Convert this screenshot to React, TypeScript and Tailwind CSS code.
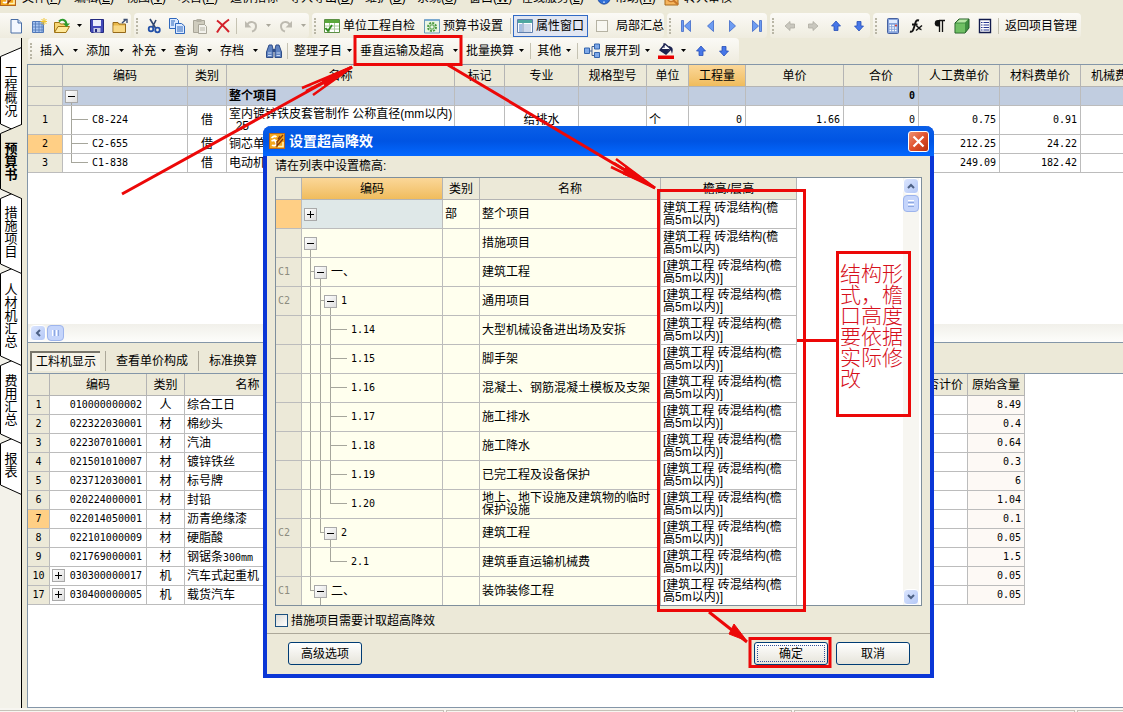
import type { ReactNode } from 'react';
import clsx from 'clsx';

type Guide = 'line' | 'tee' | 'end' | 'none';

interface TreeProps {
    guides?: Guide[];
    toggle?: 'plus' | 'minus';
    code?: string;
    cjk?: boolean;
}

const mono = "font-['DejaVu_Sans_Mono','Noto_Sans_CJK_SC',monospace] text-[10px]";

/* ---------- Icons ---------- */

const Svg = ({ children, size = 16 }: { children: ReactNode; size?: number }) => (
    <svg width={size} height={size} viewBox="0 0 16 16" fill="none" className="shrink-0" aria-hidden="true">
        {children}
    </svg>
);

const AppIcon = () => (
    <Svg>
        <rect x="0.5" y="0.5" width="15" height="15" fill="#f5a81c" stroke="#b5651d" />
        <path d="M2.500 5c2-2 4-2 5-1M2.500 8c2-1 4-1 5 0M3 12c1 1 4 1 4.500-1L5 6" stroke="#fff" strokeWidth="1.600" />
        <path d="M14 2L8 9v4l6-7M11 3L9 6" stroke="#8a3c0a" strokeWidth="1.300" />
        <path d="M9 13.500h5V9" stroke="#fff2b8" strokeWidth="1.500" />
    </Svg>
);

const NewIcon = () => (
    <Svg>
        <path d="M3 1.500h7l3.500 3.500v10H3z" fill="#f4f8ff" stroke="#4a6ea5" />
        <path d="M10 1.500V5h3.500" fill="#c9d9f2" stroke="#4a6ea5" />
    </Svg>
);

const SheetIcon = () => (
    <Svg>
        <path d="M1.500 3.500h11v11h-11z" fill="#a9c6f2" stroke="#5178b8" />
        <path d="M1 6h12M1 9h12M1 12h12M4.500 3v12M8 3v12M11 3v12" stroke="#5178b8" strokeWidth="0.8" />
        <path d="M13 0v7M9.500 3.500h7M10.500 1l5 5M15.500 1l-5 5" stroke="#f2c530" />
    </Svg>
);

const OpenIcon = () => (
    <Svg>
        <path d="M0.500 14V4.500h5l1 1.500h6v3" fill="#f7d774" stroke="#a07414" />
        <path d="M0.500 14.500L4 8.500h11.500l-3.500 6z" fill="#ffe99a" stroke="#a07414" />
        <path d="M5 3.500c3-3 7-2 7.500 3" stroke="#2d9b2d" strokeWidth="2" />
        <path d="M9 5.500h7L12.500 9z" fill="#2d9b2d" />
    </Svg>
);

const SaveIcon = () => (
    <Svg>
        <path d="M1.500 1.500h13v13h-12l-1-1z" fill="#4149b8" stroke="#23297f" />
        <path d="M4 2h8v6H4z" fill="#e9edfb" />
        <path d="M4.500 10h7v4.500h-7z" fill="#c8cde4" />
        <path d="M6 11h2v3H6z" fill="#23297f" />
    </Svg>
);

const FolderIcon = () => (
    <Svg>
        <path d="M1 4.500h5l1 1.500h6.500v8.500H1z" fill="#e9b84a" stroke="#95691a" />
        <path d="M1.500 7.500h11.500v6.500H1.500z" fill="#f8d884" />
        <path d="M10 5l4-3.500M11.500 1.500H15V5" stroke="#3d4f73" strokeWidth="1.4" />
    </Svg>
);

const CutIcon = () => (
    <Svg>
        <path d="M4 1l5.500 9M10 2L6.500 9" stroke="#30466f" strokeWidth="1.6" />
        <circle cx="5" cy="11" r="2.300" stroke="#2350a8" strokeWidth="1.800" />
        <circle cx="11.500" cy="12" r="2.300" stroke="#2350a8" strokeWidth="1.800" />
    </Svg>
);

const CopyIcon = () => (
    <Svg>
        <path d="M0.500 0.500h7l2 2v8h-9z" fill="#dbe9ff" stroke="#2f68bd" />
        <path d="M6.500 5.500h6l3 2.500v7.500h-9z" fill="#dbe9ff" stroke="#2f68bd" />
        <path d="M2 3h4M2 5h3M2 7h3M8 9h6M8 11h6M8 13h6" stroke="#2f68bd" />
    </Svg>
);

const PasteIcon = () => (
    <Svg>
        <path d="M1.500 2.500h11v12h-11z" fill="#cfccbe" stroke="#a9a699" />
        <path d="M4.500 1h5v3h-5z" fill="#b4b1a4" />
        <path d="M6.500 6.500h6l2 2v7h-8z" fill="#f3f2ec" stroke="#a9a699" />
        <path d="M8 10h5M8 12h5" stroke="#b8b5a8" />
    </Svg>
);

const DeleteIcon = () => (
    <Svg>
        <path d="M2 2.500c4 3 8 7 12 11.500M14 1.500C9 5 5 9 2 14.500" stroke="#d3202a" strokeWidth="2" />
    </Svg>
);

const UndoIcon = ({ flip }: { flip?: boolean }) => (
    <Svg>
        <g transform={flip ? 'translate(16 0) scale(-1 1)' : undefined}>
            <path d="M4 7c3-5 9-3 9 1 0 3-2 5-4 5.500" stroke="#bdbab0" strokeWidth="2" />
            <path d="M2 3v6.500h6.500z" fill="#bdbab0" />
        </g>
    </Svg>
);

const CheckSheetIcon = () => (
    <Svg>
        <path d="M0.500 1.500h15v13H0.500z" fill="#fff" stroke="#5b8f44" />
        <path d="M1 2h14v3H1z" fill="#5aa83c" />
        <path d="M1 8h14M1 11h14M5.500 5v9M10.500 5v9" stroke="#a9c99c" />
        <path d="M1.500 10l2.500 3 4-6" stroke="#2f8a1e" strokeWidth="1.8" />
    </Svg>
);

const GearSheetIcon = () => (
    <Svg>
        <path d="M0.500 1.500h15v13.500H0.500z" fill="#eaf6e4" stroke="#6b9ab8" />
        <path d="M1 1h14v2H1z" fill="#7ba9d0" />
        <circle cx="8" cy="9" r="4" stroke="#4a9a3e" strokeWidth="2" strokeDasharray="2 1.100" />
        <circle cx="8" cy="9" r="2.200" stroke="#4a9a3e" />
    </Svg>
);

const WindowIcon = () => (
    <Svg>
        <path d="M0.500 1.500h15v13H0.500z" fill="#fff" stroke="#5f7fae" />
        <path d="M1 2h14v3H1z" fill="#4fa7a0" />
        <path d="M2 7h3M2 9h3M2 11h3M2 13h3" stroke="#4f7fc4" />
        <path d="M7 7h7M7 9h7M7 11h7M7 13h7" stroke="#9fb4d8" />
        <path d="M6 5v9" stroke="#5f7fae" />
    </Svg>
);

const NavIcon = ({ bar, flip }: { bar?: boolean; flip?: boolean }) => (
    <Svg>
        <g transform={flip ? 'translate(16 0) scale(-1 1)' : undefined}>
            <path d="M11.500 2.500v11L5.500 8z" fill="#6d9cf2" stroke="#3f68c8" strokeWidth="0.8" />
            {bar && <path d="M2.500 2.500h2v11h-2z" fill="#6d9cf2" stroke="#3f68c8" strokeWidth="0.8" />}
        </g>
    </Svg>
);

const arrowRotation = { up: 0, right: 90, down: 180, left: 270 };

const ArrowIcon = ({ dir, muted }: { dir: 'up' | 'right' | 'down' | 'left'; muted?: boolean }) => (
    <Svg>
        <path
            transform={`rotate(${arrowRotation[dir]} 8 8)`}
            d="M8 3l4.500 5H10v4.500H6V8H3.500z"
            fill={muted ? '#c9c7be' : '#4777e8'}
            stroke={muted ? '#aeaca2' : '#274fb8'}
            strokeWidth="0.8"
        />
    </Svg>
);

const CalculatorIcon = () => (
    <Svg>
        <rect x="2.500" y="0.500" width="11" height="15" rx="1" fill="#87a4dc" stroke="#4661a0" />
        <path d="M4 2h8v3H4z" fill="#dfeaff" />
        <path d="M4.500 7.500h7M4.500 10h7M4.500 12.500h7" stroke="#fff" strokeWidth="1.500" strokeDasharray="1.700 1" />
        <path d="M10 7.500h2" stroke="#e2402c" strokeWidth="1.500" />
    </Svg>
);

const FunctionIcon = () => (
    <Svg>
        <path d="M11 2.500C7.500 1.500 7.500 5 6.500 8S5 14.500 2 13.500M4 6.500h5.500" stroke="#111" strokeWidth="1.900" />
        <path d="M8 8c2-1 2.500 4 5.500 3.500M14 7.500L8 12.500" stroke="#111" strokeWidth="1.500" />
    </Svg>
);

const PilcrowIcon = () => (
    <Svg>
        <path d="M8 2.500h6M8.500 2.500V14M11.500 2.500V14" stroke="#111" strokeWidth="1.300" />
        <path d="M8.500 2H7a3 3 0 000 6.500h1.500z" fill="#111" />
    </Svg>
);

const CubeIcon = () => (
    <Svg>
        <path d="M1 5l4-4h10v9l-4 5H1z" fill="#3f8f41" stroke="#245c27" />
        <path d="M1.500 5.500h9.500v9H1.500z" fill="#6fbf63" />
        <path d="M2 4.500l3.500-3h8.500l-3 3z" fill="#b7e5a6" />
    </Svg>
);

const ListIcon = () => (
    <Svg>
        <path d="M2.500 1.500h11v13h-11z" fill="#fff" stroke="#111a4d" strokeWidth="1.400" />
        <path d="M4 4.500h1.500M4 7h1.500M4 9.500h1.500M4 12h1.500M6.500 4.500H12M6.500 7H12M6.500 9.500H12M6.500 12H12" stroke="#27378f" />
    </Svg>
);

const BinocularsIcon = () => (
    <Svg>
        <path d="M3 2h3l1 4v8.500H0.500V9zM13 2h-3L9 6v8.500h6.500V9z" fill="#5f83c0" stroke="#2f4d88" />
        <path d="M6.500 6h3v3h-3z" fill="#2f4d88" />
        <path d="M2 10h3.500M10.500 10H14M2 12.500h3.500M10.500 12.500H14" stroke="#c7d8f5" />
    </Svg>
);

const ExpandIcon = () => (
    <Svg>
        <path d="M5 8h3M8 3.500v9M8 3.500h3M8 12.500h3" stroke="#44618f" />
        <path d="M0.500 5h5v5.500h-5zM10.500 1h5v5h-5zM10.500 9.500h5v5h-5z" fill="#7fa9e8" stroke="#3465ad" />
    </Svg>
);

const FillIcon = () => (
    <Svg>
        <path d="M7 1l6 5-5 5-6-4z" fill="#fff" stroke="#1c2350" strokeWidth="1.400" />
        <path d="M3 6l9 0-4 5-5-3zM11 3c4 1 4.500 3 3 8-1-3-1-5-3-6z" fill="#1c2350" />
        <path d="M6 0v5" stroke="#1c2350" />
        <path d="M0 12.500h16V16H0z" fill="#e80000" />
    </Svg>
);

const HelpIcon = () => (
    <Svg size={14}>
        <circle cx="8" cy="8" r="7" fill="#2f6fd8" stroke="#1b4596" />
        <path d="M6 5c1-2 5-1 4 1.500L8 9v1M8 12v1.500" stroke="#fff" strokeWidth="1.600" />
    </Svg>
);

const AuditIcon = () => (
    <Svg>
        <path d="M1 3h13v12H1z" fill="#f6b45c" stroke="#a86a1b" />
        <circle cx="7" cy="8" r="3.500" fill="#fdebc8" stroke="#c7772a" strokeWidth="1.500" />
        <path d="M9.500 10.500L14 14.500" stroke="#c7772a" strokeWidth="2" />
    </Svg>
);

const Caret = ({ muted }: { muted?: boolean }) => (
    <svg width="7" height="4" viewBox="0 0 7 4" className="shrink-0" aria-hidden="true">
        <path d="M1 0h5L3.500 3z" fill={muted ? '#aaa79b' : '#000'} />
    </svg>
);

/* ---------- Toolbar ---------- */

const ToolGroup = ({ children, label, className }: { children: ReactNode; label: string; className?: string }) => (
    <div
        role="toolbar"
        aria-label={label}
        className={clsx('flex h-[25px] shrink-0 items-center rounded-sm bg-gradient-to-b from-[#fbfaf6] to-[#efecdf]', className)}
    >
        <div className="ml-0.5 mr-1 h-4 w-0.5 shrink-0 border-l-2 border-dotted border-[#b9b6a6]" />
        {children}
    </div>
);

const ToolButton = ({ label, children }: { label: string; children: ReactNode }) => (
    <button type="button" aria-label={label} className="flex h-[22px] w-[23px] shrink-0 items-center justify-center">
        {children}
    </button>
);

const DropButton = ({ label, muted }: { label: string; muted?: boolean }) => (
    <button type="button" aria-label={label} className="flex h-[22px] w-3 shrink-0 items-center justify-center">
        <Caret muted={muted} />
    </button>
);

const Separator = () => <div className="mx-0.5 h-4 w-px shrink-0 bg-[#c5c2b2]" />;

const MenuButton = ({ children, wide }: { children: ReactNode; wide?: boolean }) => (
    <button type="button" className={clsx('flex h-[22px] shrink-0 items-center whitespace-nowrap pl-1 pr-[3px]', wide ? 'gap-2' : 'gap-1')}>
        {children}
        <Caret />
    </button>
);

const menus = ['文件(F)', '编辑(E)', '视图(V)', '项目(P)', '造价指标', '导入导出(D)', '维护(D)', '系统(S)', '窗口(W)', '在线服务(L)'];

const menuWidth = (name: string) => {
    if (name === '造价指标') return 'w-[59px]';
    return name.length > 5 ? 'w-[76px]' : 'w-[52px]';
};

const MenuLabel = ({ name }: { name: string }) => {
    const key = name.match(/^(.*\()(\w)\)$/);
    if (!key) return <>{name}</>;
    return (
        <>
            {key[1]}
            <u>{key[2]}</u>)
        </>
    );
};

const MenuBar = () => (
    <div className="flex h-[13px] items-end overflow-hidden whitespace-nowrap pb-[7px] leading-4">
        <div className="w-[22px] shrink-0">
            <AppIcon />
        </div>
        {menus.map((name) => (
            <button key={name} type="button" className={clsx('shrink-0 text-left', menuWidth(name))}>
                <MenuLabel name={name} />
            </button>
        ))}
        <button type="button" className="flex w-[67px] shrink-0 items-center gap-1">
            <HelpIcon />
            <span>
                <MenuLabel name="帮助(H)" />
            </span>
        </button>
        <button type="button" className="flex shrink-0 items-center gap-1">
            <AuditIcon />
            转入审核
        </button>
    </div>
);

const StandardToolbar = () => (
    <div className="flex gap-[3px]">
        <ToolGroup label="文件" className="-ml-1">
            <ToolButton label="新建"><NewIcon /></ToolButton>
            <ToolButton label="新建表"><SheetIcon /></ToolButton>
            <ToolButton label="打开"><OpenIcon /></ToolButton>
            <DropButton label="最近文件" />
            <ToolButton label="保存"><SaveIcon /></ToolButton>
            <ToolButton label="文件夹"><FolderIcon /></ToolButton>
        </ToolGroup>
        <ToolGroup label="编辑">
            <ToolButton label="剪切"><CutIcon /></ToolButton>
            <ToolButton label="复制"><CopyIcon /></ToolButton>
            <ToolButton label="粘贴"><PasteIcon /></ToolButton>
            <ToolButton label="删除"><DeleteIcon /></ToolButton>
            <Separator />
            <ToolButton label="撤销"><UndoIcon /></ToolButton>
            <DropButton label="撤销列表" muted />
            <ToolButton label="恢复"><UndoIcon flip /></ToolButton>
            <DropButton label="恢复列表" muted />
        </ToolGroup>
        <ToolGroup label="预算">
            <button type="button" className="flex shrink-0 items-center gap-[3px] px-1">
                <CheckSheetIcon />
                单位工程自检
            </button>
            <button type="button" className="flex shrink-0 items-center gap-[3px] px-[5px]">
                <GearSheetIcon />
                预算书设置
            </button>
            <Separator />
            <button type="button" className="flex h-[22px] shrink-0 items-center gap-[3px] border border-[#316ac5] bg-[#e1e6f2] px-[3px]">
                <WindowIcon />
                属性窗口
            </button>
            <label className="flex shrink-0 items-center gap-2 pl-2">
                <input type="checkbox" className="size-3 appearance-none border border-[#b5b2a3] bg-[#f8f7f1]" />
                局部汇总
            </label>
        </ToolGroup>
        <ToolGroup label="导航">
            <ToolButton label="首条"><NavIcon bar /></ToolButton>
            <ToolButton label="上一条"><NavIcon /></ToolButton>
            <ToolButton label="下一条"><NavIcon flip /></ToolButton>
            <ToolButton label="末条"><NavIcon bar flip /></ToolButton>
        </ToolGroup>
        <ToolGroup label="移动">
            <ToolButton label="升级"><ArrowIcon dir="left" muted /></ToolButton>
            <ToolButton label="降级"><ArrowIcon dir="right" muted /></ToolButton>
            <ToolButton label="上移"><ArrowIcon dir="up" /></ToolButton>
            <ToolButton label="下移"><ArrowIcon dir="down" /></ToolButton>
        </ToolGroup>
        <ToolGroup label="工具">
            <ToolButton label="计算器"><CalculatorIcon /></ToolButton>
            <ToolButton label="函数"><FunctionIcon /></ToolButton>
            <ToolButton label="段落"><PilcrowIcon /></ToolButton>
            <ToolButton label="图元"><CubeIcon /></ToolButton>
            <ToolButton label="清单"><ListIcon /></ToolButton>
            <Separator />
            <button type="button" className="shrink-0 px-1">返回项目管理</button>
        </ToolGroup>
    </div>
);

const BudgetToolbar = () => (
    <div className="flex pl-1.5">
        <ToolGroup label="预算书" className="pr-1">
            <MenuButton wide>插入</MenuButton>
            <MenuButton wide>添加</MenuButton>
            <MenuButton>补充</MenuButton>
            <MenuButton wide>查询</MenuButton>
            <MenuButton wide>存档</MenuButton>
            <ToolButton label="查找"><BinocularsIcon /></ToolButton>
            <Separator />
            <MenuButton>整理子目</MenuButton>
            <MenuButton wide>垂直运输及超高</MenuButton>
            <MenuButton>批量换算</MenuButton>
            <Separator />
            <MenuButton>其他</MenuButton>
            <Separator />
            <MenuButton>
                <ExpandIcon />
                展开到
            </MenuButton>
            <ToolButton label="填充颜色"><FillIcon /></ToolButton>
            <DropButton label="选择颜色" />
            <ToolButton label="上移"><ArrowIcon dir="up" /></ToolButton>
            <ToolButton label="下移"><ArrowIcon dir="down" /></ToolButton>
        </ToolGroup>
    </div>
);

/* ---------- Side tabs ---------- */

const sideTabs = [
    { name: '工程概况', height: 87, layer: 'z-[6]' },
    { name: '预算书', height: 75, layer: 'z-[7]', active: true },
    { name: '措施项目', height: 85, layer: 'z-[5]' },
    { name: '人材机汇总', height: 102, layer: 'z-[4]' },
    { name: '费用汇总', height: 88, layer: 'z-[3]' },
    { name: '报表', height: 61, layer: 'z-[2]' },
];

const SideTabs = () => (
    <nav className="flex w-[22px] shrink-0 flex-col border-r border-black bg-[#f3f2ea] pt-[19px]">
        {sideTabs.map(({ name, height, layer, active }) => (
            <button
                key={name}
                type="button"
                style={{ height }}
                className={clsx(
                    'relative -mt-[10px] flex w-[22px] shrink-0 items-center justify-center text-[13px] leading-[13px]',
                    layer,
                    active && 'font-bold',
                )}
            >
                <svg width="22" height={height} className="absolute inset-0 -z-10" aria-hidden="true">
                    <path
                        d={`M21.500 0.500L0.500 9.500V${height - 10}L21.500 ${height - 0.5}${active ? '' : 'z'}`}
                        fill={active ? '#ece9d8' : '#fff'}
                        stroke="#000"
                    />
                    {active && <path d={`M21.500 1V${height - 1}`} stroke="#ece9d8" />}
                </svg>
                <span className="w-[13px] break-all">{name}</span>
            </button>
        ))}
    </nav>
);

/* ---------- Tables ---------- */

const Toggle = ({ kind }: { kind: 'plus' | 'minus' }) => (
    <button
        type="button"
        aria-label={kind === 'plus' ? '展开' : '折叠'}
        className="flex size-[13px] shrink-0 items-center justify-center border border-[#a9a9a9] bg-gradient-to-br from-white to-[#dedede]"
    >
        <svg width="7" height="7" viewBox="0 0 7 7" aria-hidden="true">
            <path d={kind === 'plus' ? 'M0 3.500h7M3.500 0v7' : 'M0 3.500h7'} stroke="#000" />
        </svg>
    </button>
);

const TreeCell = ({ guides = [], toggle, code, cjk }: TreeProps) => (
    <div className={clsx('flex h-full', guides.length ? 'pl-2' : 'pl-0.5')}>
        {guides.map((guide, i) => {
            const last = i === guides.length - 1;
            const width = last ? (toggle ? 'w-1' : 'w-[17px]') : 'w-2.5';
            return (
                <span key={i} className={clsx('grid shrink-0 grid-rows-2', width)}>
                    <span className={clsx('border-[#a6a69c]', guide !== 'none' && 'border-l', (guide === 'tee' || guide === 'end') && 'border-b')} />
                    <span className={clsx('border-[#a6a69c]', (guide === 'line' || guide === 'tee') && 'border-l')} />
                </span>
            );
        })}
        {toggle && (
            <span className="flex flex-col items-center">
                <span className="flex-1" />
                <Toggle kind={toggle} />
                <span className={clsx('w-px flex-1', toggle === 'minus' && 'bg-[#a6a69c]')} />
            </span>
        )}
        {code && <span className={clsx('self-center pl-1', !cjk && mono)}>{code}</span>}
    </div>
);

const th = 'border-b border-r border-[#b4b4b4] bg-[#ece9d8] p-0 font-normal whitespace-nowrap';
const td = 'border-b border-r border-[#bcbcbc] p-0';
const highlight = 'bg-gradient-to-b from-[#fbd798] to-[#f0bc5c]';

const budgetColumns = [
    { name: '', width: 'w-[35px]' },
    { name: '编码', width: 'w-[125px]' },
    { name: '类别', width: 'w-[39px]' },
    { name: '名称', width: 'w-[228px]' },
    { name: '标记', width: 'w-[50px]' },
    { name: '专业', width: 'w-[74px]' },
    { name: '规格型号', width: 'w-[68px]' },
    { name: '单位', width: 'w-[42px]' },
    { name: '工程量', width: 'w-[57px]' },
    { name: '单价', width: 'w-[98px]' },
    { name: '合价', width: 'w-[75px]' },
    { name: '人工费单价', width: 'w-[81px]' },
    { name: '材料费单价', width: 'w-[81px]' },
    { name: '机械费单价', width: 'w-[81px]' },
];

const budgetRows = [
    { no: '1', code: 'C8-224', guide: 'tee' as Guide, name: '室内镀锌铁皮套管制作 公称直径(mm以内)\n  25', major: '给排水', unit: '个', qty: '0', price: '1.66', total: '0', labour: '0.75', material: '0.91' },
    { no: '2', code: 'C2-655', guide: 'tee' as Guide, name: '铜芯单', labour: '212.25', material: '24.22', active: true },
    { no: '3', code: 'C1-838', guide: 'end' as Guide, name: '电动机', labour: '249.09', material: '182.42' },
];

const BudgetTable = () => (
    <table className="w-[1134px] table-fixed border-separate border-spacing-0">
        <colgroup>
            {budgetColumns.map((c, i) => <col key={i} className={c.width} />)}
        </colgroup>
        <thead>
            <tr className="h-[22px]">
                {budgetColumns.map((c, i) => (
                    <th key={i} className={clsx(th, c.name === '工程量' && highlight)}>{c.name}</th>
                ))}
            </tr>
        </thead>
        <tbody>
            <tr className="h-[19px] bg-[#c1cde0] font-bold">
                <td className={clsx(td, 'bg-[#ece9d8]')} />
                <td className={clsx(td, 'h-[19px]')}><TreeCell toggle="minus" /></td>
                <td className={td} />
                <td className={clsx(td, 'pl-0.5')}>整个项目</td>
                {budgetColumns.slice(4).map((c) => (
                    <td key={c.name} className={clsx(td, 'pr-[3px] text-right', mono)}>{c.name === '合价' && '0'}</td>
                ))}
            </tr>
            {budgetRows.map((row) => (
                <tr key={row.no} className={row.no === '1' ? 'h-[29px]' : 'h-[19px]'}>
                    <td className={clsx(td, mono, 'text-center', row.active ? 'bg-[#ffcf85]' : 'bg-[#ece9d8]')}>{row.no}</td>
                    <td className={clsx(td, row.no === '1' ? 'h-[29px]' : 'h-[19px]')}><TreeCell guides={[row.guide]} code={row.code} /></td>
                    <td className={clsx(td, 'text-center')}>借</td>
                    <td className={clsx(td, 'whitespace-pre-wrap pl-0.5 leading-3')}>{row.name}</td>
                    <td className={td} />
                    <td className={clsx(td, 'text-center')}>{row.major}</td>
                    <td className={td} />
                    <td className={clsx(td, 'pl-0.5')}>{row.unit}</td>
                    {[row.qty, row.price, row.total, row.labour, row.material, ''].map((value, i) => (
                        <td key={i} className={clsx(td, mono, 'pr-[3px] text-right')}>{value}</td>
                    ))}
                </tr>
            ))}
        </tbody>
    </table>
);

const resources = [
    ['1', '010000000002', '人', '综合工日', '8.49'],
    ['2', '022322030001', '材', '棉纱头', '0.4'],
    ['3', '022307010001', '材', '汽油', '0.64'],
    ['4', '021501010007', '材', '镀锌铁丝', '0.3'],
    ['5', '023712030001', '材', '标号牌', '6'],
    ['6', '020224000001', '材', '封铅', '1.04'],
    ['7', '022014050001', '材', '沥青绝缘漆', '0.1'],
    ['8', '022101000009', '材', '硬脂酸', '0.05'],
    ['9', '021769000001', '材', '钢锯条300mm', '1.5'],
    ['10', '030300000017', '机', '汽车式起重机', '0.05'],
    ['17', '030400000005', '机', '载货汽车', '0.05'],
];

// Sizes inside a name use the same digits as the number columns
const ResourceName = ({ name }: { name: string }) => {
    const [text, size] = name.split(/(\d+mm)/);
    return (
        <>
            {text}
            {size && <span className={mono}>{size}</span>}
        </>
    );
};

const ResourceTable = () => (
    <table className="w-[997px] table-fixed border-separate border-spacing-0">
        <colgroup>
            <col className="w-[22px]" />
            <col className="w-[97px]" />
            <col className="w-[38px]" />
            <col className="w-[126px]" />
            <col />
            <col className="w-[57px]" />
            <col className="w-[57px]" />
        </colgroup>
        <thead>
            <tr className="h-[22px]">
                {['', '编码', '类别', '名称', '', '是否计价', '原始含量'].map((name, i) => (
                    <th key={i} className={th}>{name}</th>
                ))}
            </tr>
        </thead>
        <tbody>
            {resources.map(([no, code, kind, name, amount]) => (
                <tr key={no} className="h-[19px]">
                    <td className={clsx(td, mono, 'text-center', no === '7' ? 'bg-[#ffcf85]' : 'bg-[#ece9d8]')}>{no}</td>
                    <td className={td}>
                        <div className="flex items-center justify-end pl-0.5 pr-1">
                            {kind === '机' && <Toggle kind="plus" />}
                            <span className={clsx('ml-auto', mono)}>{code}</span>
                        </div>
                    </td>
                    <td className={clsx(td, 'text-center')}>{kind}</td>
                    <td className={clsx(td, 'pl-0.5')}><ResourceName name={name} /></td>
                    <td className={td} />
                    <td className={td} />
                    <td className={clsx(td, mono, 'bg-[#fdf9f5] pr-[3px] text-right')}>{amount}</td>
                </tr>
            ))}
        </tbody>
    </table>
);

/* ---------- Scroll bars ---------- */

const scrollButton = 'flex size-4 shrink-0 items-center justify-center rounded-sm border border-white bg-gradient-to-br from-[#dbe5fe] to-[#b4c8f6]';

const Chevron = ({ d }: { d: string }) => (
    <svg width="8" height="8" viewBox="0 0 8 8" fill="none" aria-hidden="true">
        <path d={d} stroke="#4d6185" strokeWidth="2" />
    </svg>
);

/* ---------- Dialog ---------- */

interface HeightRow extends TreeProps {
    mark?: string;
    name: string;
    kind?: string;
}

const heightRows: HeightRow[] = [
    { toggle: 'plus', kind: '部', name: '整个项目' },
    { toggle: 'minus', name: '措施项目' },
    { mark: 'C1', guides: ['tee'], toggle: 'minus', code: '一、', cjk: true, name: '建筑工程' },
    { mark: 'C2', guides: ['line', 'tee'], toggle: 'minus', code: '1', name: '通用项目' },
    { guides: ['line', 'line', 'tee'], code: '1.14', name: '大型机械设备进出场及安拆' },
    { guides: ['line', 'line', 'tee'], code: '1.15', name: '脚手架' },
    { guides: ['line', 'line', 'tee'], code: '1.16', name: '混凝土、钢筋混凝土模板及支架' },
    { guides: ['line', 'line', 'tee'], code: '1.17', name: '施工排水' },
    { guides: ['line', 'line', 'tee'], code: '1.18', name: '施工降水' },
    { guides: ['line', 'line', 'tee'], code: '1.19', name: '已完工程及设备保护' },
    { guides: ['line', 'line', 'end'], code: '1.20', name: '地上、地下设施及建筑物的临时保护设施' },
    { mark: 'C2', guides: ['line', 'end'], toggle: 'minus', code: '2', name: '建筑工程' },
    { guides: ['line', 'none', 'end'], code: '2.1', name: '建筑垂直运输机械费' },
    { mark: 'C1', guides: ['end'], toggle: 'minus', code: '二、', cjk: true, name: '装饰装修工程' },
];

const HeightTable = () => (
    <table className="w-[521px] table-fixed border-separate border-spacing-0">
        <colgroup>
            <col className="w-[26px]" />
            <col className="w-[141px]" />
            <col className="w-[37px]" />
            <col className="w-[181px]" />
            <col className="w-[136px]" />
        </colgroup>
        <thead>
            <tr className="h-[22px]">
                {['', '编码', '类别', '名称', '檐高/层高'].map((name, i) => (
                    <th key={i} className={clsx(th, name === '编码' && highlight)}>{name}</th>
                ))}
            </tr>
        </thead>
        <tbody>
            {heightRows.map((row, i) => (
                <tr key={i} className="h-[29px] bg-[#ffffee]">
                    <td className={clsx(td, mono, 'pl-0.5 text-[#8c8c80]', i === 0 ? 'bg-[#ffcf85]' : 'bg-[#ece9d8]')}>{row.mark}</td>
                    <td className={clsx(td, 'h-[29px]', i === 0 && 'bg-[#dfe8e8]')}>
                        <TreeCell guides={row.guides} toggle={row.toggle} code={row.code} cjk={row.cjk} />
                    </td>
                    <td className={clsx(td, 'pl-0.5')}>{row.kind}</td>
                    <td className={clsx(td, 'pl-0.5 leading-3')}>{row.name}</td>
                    <td className={clsx(td, 'bg-white pl-0.5 leading-3')}>
                        {i > 1 && '['}建筑工程 砖混结构(檐<br />高5m以内){i > 1 && ']'}
                    </td>
                </tr>
            ))}
        </tbody>
    </table>
);

const dialogButton = 'h-[23px] w-[74px] rounded-[3px] border border-[#003c74] bg-gradient-to-b from-white to-[#e6e4da]';

const HeightDialog = () => (
    <div
        role="dialog"
        aria-labelledby="dialog-title"
        className="absolute left-[263px] top-[126px] z-20 w-[671px] rounded-t-lg border-x-4 border-b-4 border-[#0a36d6] bg-[#ece9d8]"
    >
        <div className="-mx-1 flex h-[30px] items-center gap-1 rounded-t-lg bg-gradient-to-b from-[#0a5fe8] via-[#0054e3] to-[#0468ff] pl-1.5 pr-[5px]">
            <AppIcon />
            <h2 id="dialog-title" className="flex-1 text-sm font-bold text-white">设置超高降效</h2>
            <button type="button" aria-label="关闭" className="flex size-[21px] items-center justify-center rounded-[3px] border border-white bg-gradient-to-br from-[#ee9070] via-[#e0512c] to-[#b8300c]">
                <svg width="13" height="13" viewBox="0 0 13 13" aria-hidden="true">
                    <path d="M1.500 1.500l10 10M11.500 1.500l-10 10" stroke="#fff" strokeWidth="2.200" />
                </svg>
            </button>
        </div>
        <p className="h-[21px] pl-2 leading-5">请在列表中设置檐高:</p>
        <div className="mx-2 flex h-[429px] justify-between overflow-hidden border border-[#7f8f9c] bg-white">
            <HeightTable />
            <div className="mr-0.5 flex w-4 flex-col bg-[#f7f6f1]">
                <button type="button" aria-label="向上滚动" className={scrollButton}><Chevron d="M1 6l3-3 3 3" /></button>
                <div className="mt-px flex h-[17px] flex-col items-center justify-center gap-px rounded-sm border border-[#9db4ec] bg-[#c5d5fb]">
                    <span className="h-px w-1.5 bg-white" />
                    <span className="h-px w-1.5 bg-[#8ea8e0]" />
                    <span className="h-px w-1.5 bg-white" />
                    <span className="h-px w-1.5 bg-[#8ea8e0]" />
                </div>
                <div className="flex-1" />
                <button type="button" aria-label="向下滚动" className={scrollButton}><Chevron d="M1 2l3 3 3-3" /></button>
            </div>
        </div>
        <label className="flex h-7 items-center gap-[3px] border-b border-[#aca899] pl-2 pt-0.5">
            <input type="checkbox" className="size-[13px] appearance-none border border-[#1c5180] bg-gradient-to-br from-[#dcdcd7] to-white" />
            措施项目需要计取超高降效
        </label>
        <div className="flex items-start gap-2 pb-[9px] pl-[21px] pr-5 pt-2">
            <button type="button" className={dialogButton}>高级选项</button>
            <button type="button" className={clsx(dialogButton, 'ml-auto p-0.5')}>
                <span className="flex h-full items-center justify-center border border-dotted border-[#31509c]">确定</span>
            </button>
            <button type="button" className={dialogButton}>取消</button>
        </div>
    </div>
);

/* ---------- Red markup ---------- */

const Markup = () => (
    <>
        <svg width="1123" height="712" viewBox="0 0 1123 712" fill="none" stroke="#ec0808" className="pointer-events-none absolute left-0 top-0 z-30" aria-hidden="true">
            <g strokeWidth="3">
                <rect x="355" y="36.500" width="106" height="28" />
                <rect x="658.500" y="190.500" width="146" height="420" />
                <rect x="750" y="638.500" width="80" height="28" />
                <rect x="837.500" y="252.500" width="72" height="163" />
                <path d="M797 340.500h40" />
                <path d="M122 194L352 67M448 65l207 123M709 612l38 30" />
            </g>
            <path d="M302 88l50-21-39 28M306 91l46-24" strokeWidth="2.500" />
            <path d="M350 67l-28 13 3 6z" fill="#ec0808" />
            <path d="M616 159l39 29-44-21M614 163l41 25" strokeWidth="2.500" />
            <path d="M654 187l-28-21-3 8z" fill="#ec0808" />
            <path d="M747 641l-18-7 5-10z" fill="#ec0808" />
        </svg>
        <p className="absolute left-[840px] top-[263px] z-30 w-[66px] break-all text-[21px] font-light leading-[21px] text-[#d6101c]">
            结构形<br />式，檐<br />口高度<br />要依据<br />实际修<br />改
        </p>
    </>
);

export default function App() {
    return (
        <div className="relative flex h-screen flex-col overflow-hidden bg-[#ece9d8] font-['Liberation_Sans','Noto_Sans_CJK_SC',sans-serif] text-xs text-black">
            <MenuBar />
            <StandardToolbar />
            <div className="flex min-h-0 flex-1">
                <SideTabs />
                <div className="flex min-w-0 flex-1 flex-col">
                    <BudgetToolbar />
                    <main className="mt-px ml-[5px] flex min-h-0 flex-1 flex-col border-l border-[#8496a8]">
                        <section className="flex h-[279px] shrink-0 flex-col overflow-hidden border-y border-[#8496a8] bg-white">
                            <BudgetTable />
                            <div className="mt-auto flex h-[18px] shrink-0 items-center gap-px bg-gradient-to-b from-[#f1f0ea] to-[#fdfdfb] pl-0.5">
                                <button type="button" aria-label="向左滚动" className={scrollButton}><Chevron d="M6 1L3 4l3 3" /></button>
                                <div className="flex h-4 w-[17px] items-center justify-center gap-px rounded-sm border border-[#9db4ec] bg-[#c5d5fb]">
                                    <span className="h-1.5 w-px bg-white" />
                                    <span className="h-1.5 w-px bg-[#8ea8e0]" />
                                    <span className="h-1.5 w-px bg-white" />
                                    <span className="h-1.5 w-px bg-[#8ea8e0]" />
                                </div>
                            </div>
                        </section>
                        <div role="tablist" className="flex h-[30px] shrink-0 items-end gap-[5px] pb-0.5 pl-0.5">
                            <button type="button" role="tab" aria-selected="true" className="h-5 border-l-2 border-t-2 border-[#77756a] bg-[#f4f2e8] px-1">工料机显示</button>
                            <span className="h-5 w-px bg-[#aca899]" />
                            <button type="button" role="tab" aria-selected="false" className="h-5 px-[5px]">查看单价构成</button>
                            <span className="h-5 w-px bg-[#aca899]" />
                            <button type="button" role="tab" aria-selected="false" className="h-5 px-[5px]">标准换算</button>
                        </div>
                        <section className="flex-1 overflow-hidden border-y border-[#8496a8] bg-white">
                            <ResourceTable />
                        </section>
                    </main>
                </div>
            </div>
            <footer className="flex h-1 shrink-0 gap-0.5 bg-[#f7f6f1] pt-0.5">
                <div className="flex-[445] border-r border-t border-[#c5c2b8]" />
                <div className="flex-[346] border-x border-t border-[#c5c2b8]" />
                <div className="flex-[281] border-x border-t border-[#c5c2b8]" />
                <div className="flex-[45] border-l border-t border-[#c5c2b8]" />
            </footer>
            <HeightDialog />
            <Markup />
        </div>
    );
}
